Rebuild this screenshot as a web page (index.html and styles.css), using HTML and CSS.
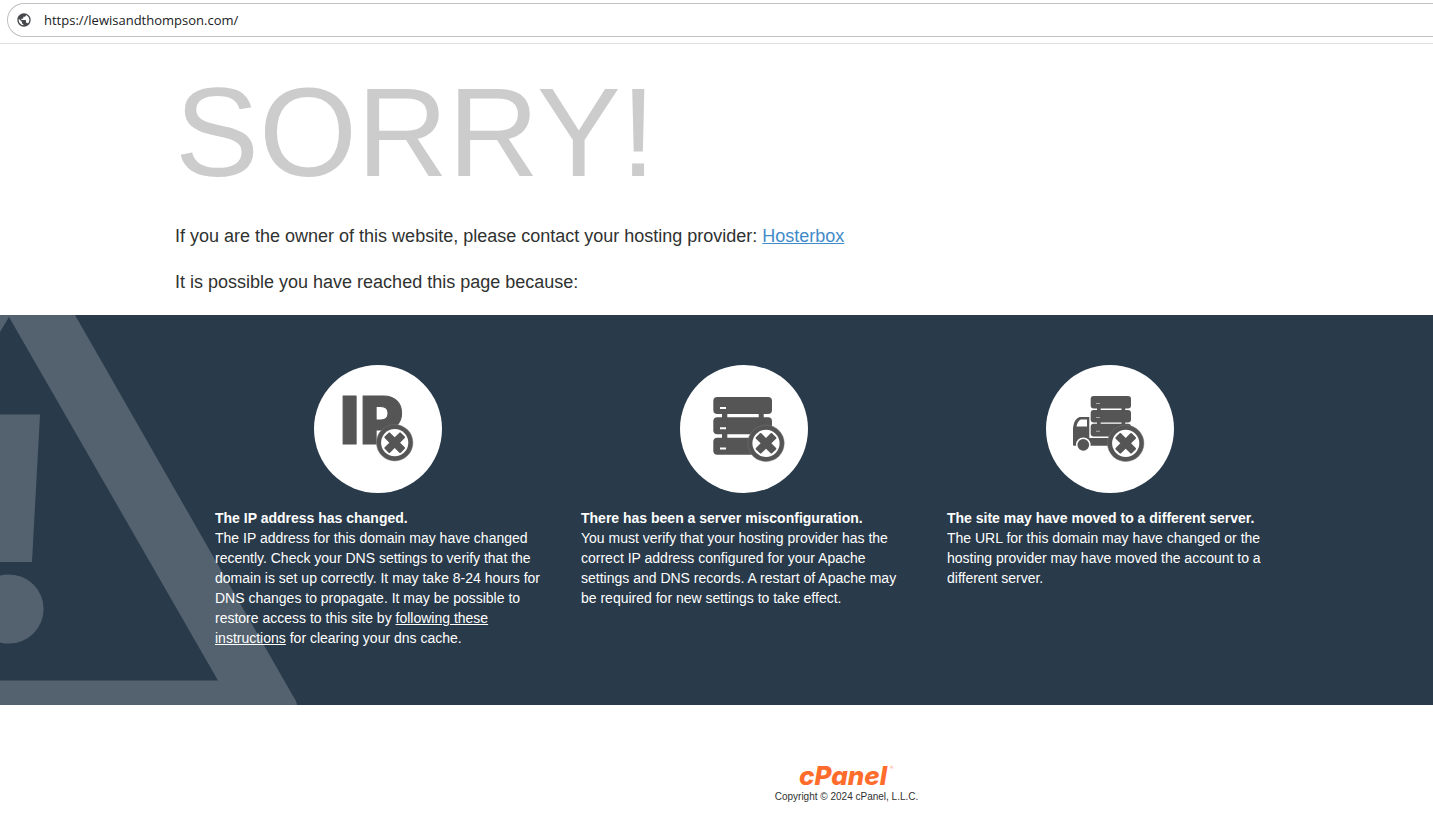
FILE: index.html
```html
<!DOCTYPE html>
<html lang="en">
<head>
<meta charset="utf-8">
<meta name="viewport" content="width=device-width, initial-scale=1">
<title>Sorry!</title>
<link rel="stylesheet" href="styles.css">
</head>
<body>
<svg width="0" height="0" class="defs" aria-hidden="true">
  <defs>
    <g id="badge">
      <circle r="18.2" fill="#555" stroke="#777" stroke-width=".5"/>
      <circle r="13.6" fill="#fff"/>
      <path transform="rotate(45)" fill="#555" d="M-3.8-10.4q0-1 1-1h5.6q1 0 1 1v6.6h6.6q1 0 1 1v5.6q0 1-1 1h-6.6v6.6q0 1-1 1h-5.6q-1 0-1-1v-6.6h-6.6q-1 0-1-1v-5.6q0-1 1-1h6.6z"/>
    </g>
  </defs>
</svg>
<header class="toolbar">
  <div class="address">
    <svg class="globe" viewBox="0 0 24 24" aria-hidden="true"><path fill="#45484c" d="M12 2C6.48 2 2 6.48 2 12s4.48 10 10 10 10-4.48 10-10S17.52 2 12 2zm-1 17.93c-3.95-.49-7-3.85-7-7.93 0-.62.08-1.21.21-1.79L9 15v1c0 1.1.9 2 2 2v1.93zm6.9-2.54c-.26-.81-1-1.39-1.9-1.39h-1v-3c0-.55-.45-1-1-1H8v-2h2c.55 0 1-.45 1-1V7h2c1.1 0 2-.9 2-2v-.41c2.93 1.19 5 4.06 5 7.41 0 2.08-.8 3.97-2.1 5.39z"/></svg>
    <input class="url" type="text" aria-label="Address" value="https://lewisandthompson.com/">
  </div>
</header>
<main>
  <section class="intro">
    <h1 class="status">SORRY!</h1>
    <p class="lead">If you are the owner of this website, please contact your hosting provider: <a href="#">Hosterbox</a></p>
    <p class="lead">It is possible you have reached this page because:</p>
  </section>
  <section class="reasons">
    <svg class="warning" viewBox="0 0 300 390" aria-hidden="true">
      <path fill="#54626f" fill-rule="evenodd" d="M0 0H75L293 381Q297 387 297 390H0V365.5H218L9 2 0 17z"/>
      <path fill="#54626f" d="M0 99.5H40L32 247H0z"/>
      <circle cx="9" cy="294" r="34.6" fill="#54626f"/>
    </svg>
    <ul class="reason-list">
      <li class="reason">
        <svg class="reason-icon" viewBox="0 0 128 128" aria-hidden="true">
          <circle cx="64" cy="64" r="64" fill="#fff"/>
          <text class="ip-text" x="26" y="79">I</text>
          <text class="ip-text" x="46" y="79">P</text>
          <use href="#badge" x="80.7" y="77.7"/>
        </svg>
        <h2 class="reason-title">The IP address has changed.</h2>
        <p class="reason-text">The IP address for this domain may have changed recently. Check your DNS settings to verify that the domain is set up correctly. It may take 8-24 hours for DNS changes to propagate. It may be possible to restore access to this site by <a href="#">following these instructions</a> for clearing your dns cache.</p>
      </li>
      <li class="reason">
        <svg class="reason-icon" viewBox="0 0 128 128" aria-hidden="true">
          <circle cx="64" cy="64" r="64" fill="#fff"/>
          <g fill="#555">
            <rect x="33.3" y="32" width="58.7" height="17" rx="4"/>
            <rect x="33.3" y="52.3" width="58.7" height="17" rx="4"/>
            <rect x="33.3" y="72.7" width="58.7" height="17" rx="4"/>
            <path d="M42 48h5.3v26H42zM78.7 48h5v26h-5z"/>
          </g>
          <path fill="#fff" d="M40 42h6v2h-6zM40 62.3h6v2h-6zM40 82.5h6v2h-6z"/>
          <use href="#badge" x="86" y="78.3"/>
        </svg>
        <h2 class="reason-title">There has been a server misconfiguration.</h2>
        <p class="reason-text">You must verify that your hosting provider has the correct IP address configured for your Apache settings and DNS records. A restart of Apache may be required for new settings to take effect.</p>
      </li>
      <li class="reason">
        <svg class="reason-icon" viewBox="0 0 128 128" aria-hidden="true">
          <circle cx="64" cy="64" r="64" fill="#fff"/>
          <g fill="#555">
            <rect x="44.7" y="31" width="40.3" height="12.6" rx="3"/>
            <rect x="44.7" y="45" width="40.3" height="12.6" rx="3"/>
            <rect x="44.7" y="58.8" width="40.3" height="12.6" rx="3"/>
            <path d="M51 42h3.7v18H51zM75.5 42h3.7v18h-3.7z"/>
            <path fill-rule="evenodd" d="M33.5 52H43.3V73H66V80.8H28Q27 80.8 27 79.5V63Q28 54 33.5 52zM34.8 54.5Q31.5 56 30.5 61.5H41V54.5z"/>
            <circle cx="37.3" cy="79.8" r="6.6" stroke="#fff" stroke-width="1.5"/>
          </g>
          <path fill="#aaa" d="M50 38h4v1h-4zM50 52h4v1h-4zM50 65.8h4v1h-4z"/>
          <use href="#badge" x="79.7" y="78.3"/>
        </svg>
        <h2 class="reason-title">The site may have moved to a different server.</h2>
        <p class="reason-text">The URL for this domain may have changed or the hosting provider may have moved the account to a different server.</p>
      </li>
    </ul>
  </section>
</main>
<footer class="footer">
  <a class="brand" href="#" aria-label="cPanel"><svg class="logo" viewBox="0 0 96 24" aria-hidden="true">
    <text class="logo-text" x="0" y="21">cPanel</text>
    <text class="logo-mark" x="91" y="5">®</text>
  </svg></a>
  <p class="copyright">Copyright © 2024 cPanel, L.L.C.</p>
</footer>
</body>
</html>
```
FILE: styles.css
```css
* { box-sizing: border-box; }
body {
  margin: 0;
  background: #fff;
  color: #2f3230;
  font-family: "Liberation Sans", Arial, sans-serif;
  font-size: 18px;
  line-height: 26px;
}
h1, h2, p, ul { margin: 0; padding: 0; }
.defs { position: absolute; }
.toolbar {
  padding: 3px 0 6px 7px;
  border-bottom: 1px solid #dfe1e5;
}
.address {
  display: flex;
  align-items: center;
  gap: 12px;
  height: 34px;
  padding-left: 8px;
  border: 1px solid #c0c0c0;
  border-right: 0;
  border-radius: 17px 0 0 17px;
}
.globe { width: 16px; height: 16px; }
.url {
  flex: 1;
  padding: 0;
  border: 0;
  outline: 0;
  background: none;
  color: #202124;
  font: 13px/20px "Open Sans", "Noto Sans", sans-serif;
}
.intro { padding: 18px 175px 20px; }
.status {
  color: #ccc;
  font-size: 126px;
  font-weight: 400;
  line-height: 142px;
}
.lead { padding-top: 20px; }
.status + .lead { padding-top: 19px; }
.lead a { color: #428bca; }
.reasons {
  position: relative;
  padding: 50px 140px 57px 195px;
  background: #293a4a;
  color: #fff;
}
.warning {
  position: absolute;
  top: 0;
  left: 0;
  height: 100%;
}
.reason-list {
  position: relative;
  display: grid;
  grid-template-columns: repeat(3, 1fr);
  list-style: none;
}
.reason {
  padding: 0 20px;
  font-size: 14px;
  line-height: 20px;
}
.reason-icon {
  display: block;
  width: 128px;
  height: 128px;
  margin: 0 auto 15px;
}
.ip-text {
  fill: #555;
  stroke: #555;
  stroke-width: 1px;
  stroke-linejoin: round;
  font: 900 66px Inter, sans-serif;
}
.reason-title {
  font-size: 14px;
  line-height: 20px;
}
.reason-text a { color: #fff; }
.footer {
  padding: 59px 0 20px 260px;
  text-align: center;
}
.brand {
  display: block;
  height: 25px;
  line-height: 0;
}
.logo { width: 96px; height: 24px; }
.logo-text {
  fill: #ff6c2c;
  font: italic 800 26px Inter, sans-serif;
}
.logo-mark {
  fill: #ff6c2c;
  font: 4px Lato, sans-serif;
}
.copyright {
  font-size: 10px;
  line-height: 16px;
}
```
